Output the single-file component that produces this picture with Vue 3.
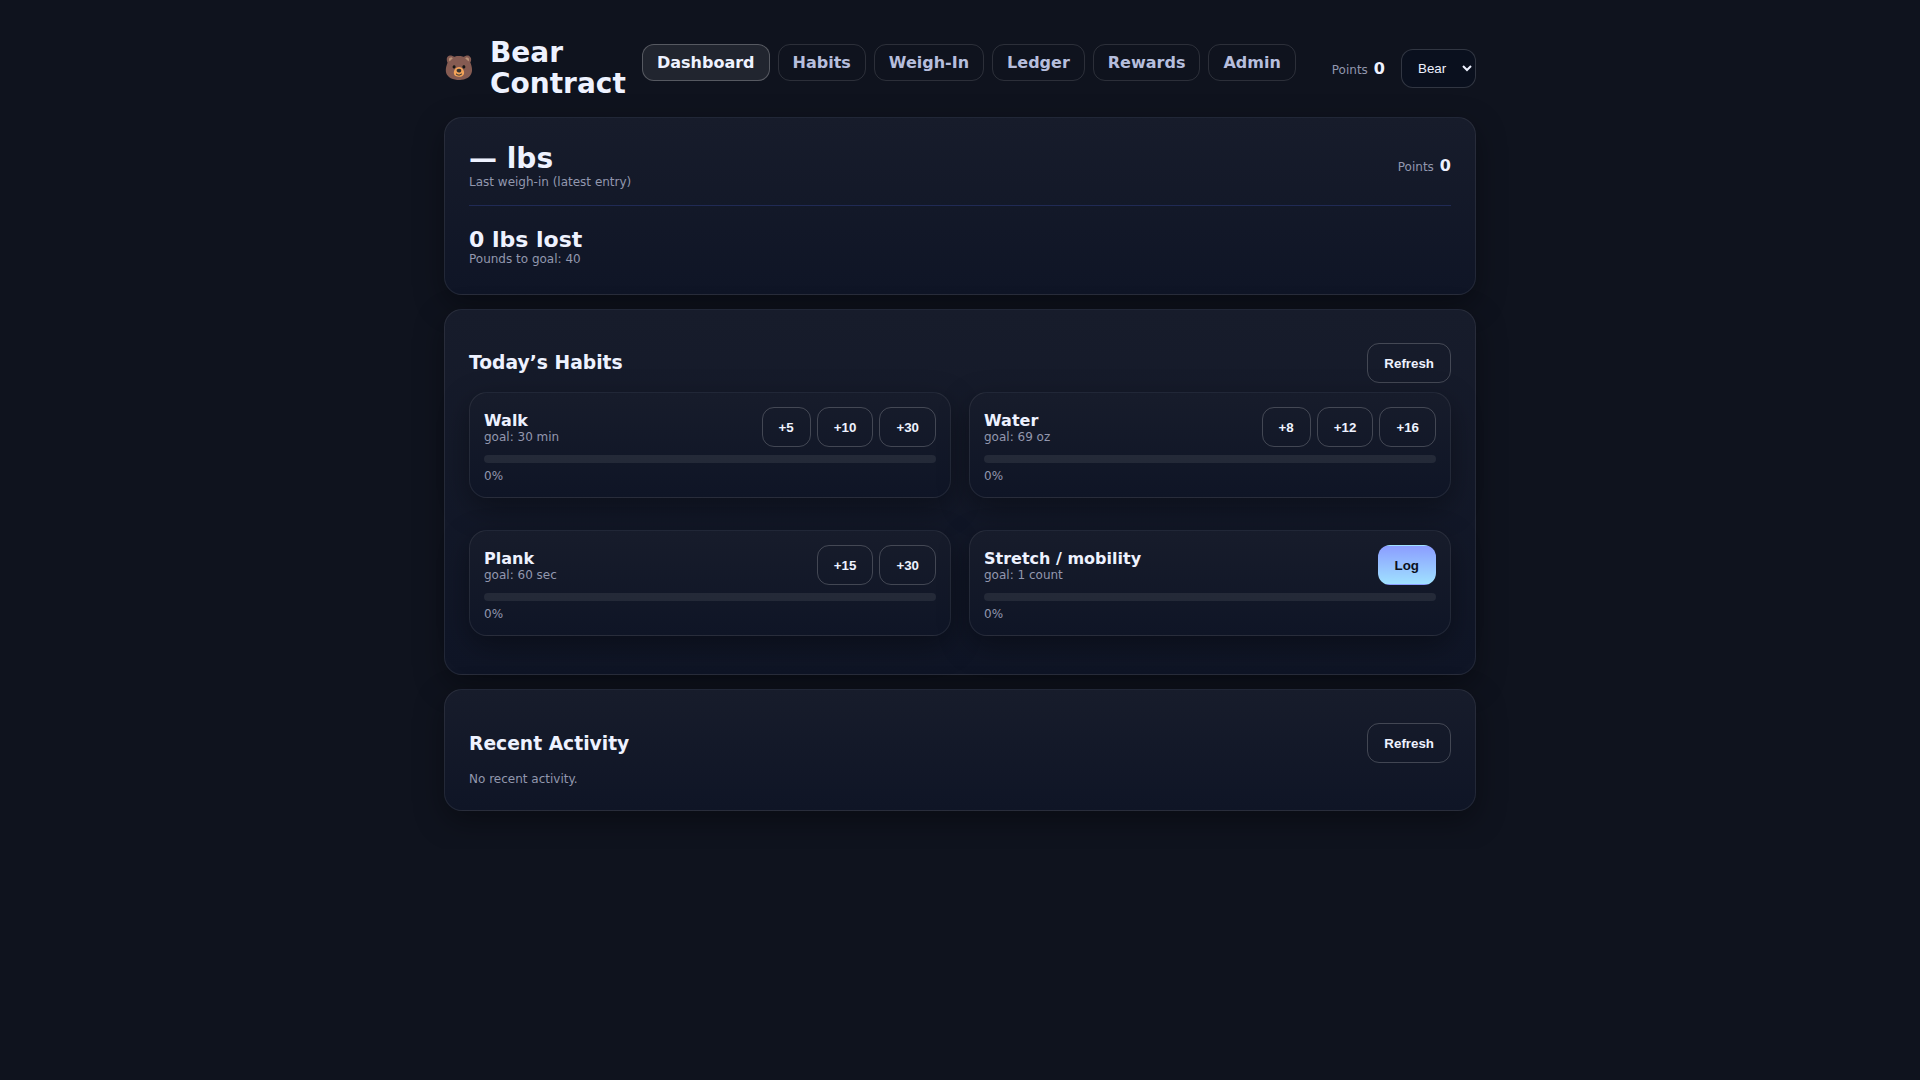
<script setup>
import { ref } from 'vue'

const tabs = ['Dashboard', 'Habits', 'Weigh-In', 'Ledger', 'Rewards', 'Admin']
const active = ref('Dashboard')
const user = ref('Bear')

const habits = [
  { name: 'Walk', goal: '30 min', progress: 0, steps: ['+5', '+10', '+30'] },
  { name: 'Water', goal: '69 oz', progress: 0, steps: ['+8', '+12', '+16'] },
  { name: 'Plank', goal: '60 sec', progress: 0, steps: ['+15', '+30'] },
  { name: 'Stretch / mobility', goal: '1 count', progress: 0, steps: [] },
]
</script>

<template>
  <div class="container">
    <header class="header">
      <div class="brand">
        <span class="logo" aria-hidden="true">🐻</span>
        <h1>Bear Contract</h1>
      </div>
      <nav class="tabs">
        <a
          v-for="tab in tabs"
          :key="tab"
          href="#"
          class="tab"
          :class="{ active: tab === active }"
          @click.prevent="active = tab"
        >{{ tab }}</a>
      </nav>
      <div class="account">
        <div class="points"><span class="muted">Points</span><strong>0</strong></div>
        <select v-model="user" aria-label="User">
          <option>Bear</option>
        </select>
      </div>
    </header>

    <main>
      <section class="card summary">
        <div class="row">
          <div>
            <div class="weight">— lbs</div>
            <div class="muted">Last weigh-in (latest entry)</div>
          </div>
          <div class="points"><span class="muted">Points</span><strong>0</strong></div>
        </div>
        <hr />
        <div class="lost">0 lbs lost</div>
        <div class="muted">Pounds to goal: 40</div>
      </section>

      <section class="card">
        <div class="row">
          <h3>Today’s Habits</h3>
          <button type="button">Refresh</button>
        </div>
        <div class="habits">
          <article v-for="habit in habits" :key="habit.name" class="card habit">
            <div class="row">
              <div>
                <div class="name">{{ habit.name }}</div>
                <div class="muted">goal: {{ habit.goal }}</div>
              </div>
              <div class="actions">
                <button v-for="step in habit.steps" :key="step" type="button">{{ step }}</button>
                <button v-if="!habit.steps.length" type="button" class="primary">Log</button>
              </div>
            </div>
            <div class="bar"><div class="fill" :style="{ width: habit.progress + '%' }"></div></div>
            <div class="muted">{{ habit.progress }}%</div>
          </article>
        </div>
      </section>

      <section class="card activity">
        <div class="row">
          <h3>Recent Activity</h3>
          <button type="button">Refresh</button>
        </div>
        <div class="muted">No recent activity.</div>
      </section>
    </main>
  </div>
</template>

<style>
body {
  margin: 0;
  background: #0f131e;
}
</style>

<style scoped>
.container {
  box-sizing: border-box;
  max-width: 1080px;
  margin: 0 auto;
  padding: 37px 24px 24px;
  color: #eef2ff;
  font-family: "DejaVu Sans", sans-serif;
  font-size: 16px;
}

.header {
  display: flex;
  align-items: center;
  gap: 16px;
  margin-bottom: 18px;
}

.brand {
  display: flex;
  align-items: center;
  gap: 16px;
  flex: 1;
}

.logo {
  font-size: 24px;
  line-height: 28px;
}

h1 {
  margin: 0;
  font-size: 28px;
  line-height: 31px;
}

.tabs {
  display: flex;
  gap: 8px;
  margin-bottom: 12px;
}

.tab {
  padding: 8px 14px;
  border: 1px solid rgba(255, 255, 255, 0.12);
  border-radius: 12px;
  color: #b6bedd;
  font-weight: 700;
  text-decoration: none;
  white-space: nowrap;
}

.tab.active {
  background: rgba(255, 255, 255, 0.08);
  border-color: rgba(255, 255, 255, 0.24);
  color: #eef2ff;
}

.account {
  display: flex;
  align-items: center;
  gap: 16px;
  margin-left: 20px;
}

.points {
  display: flex;
  align-items: baseline;
  gap: 6px;
}

.muted {
  color: #9297ae;
  font-size: 12px;
}

select {
  padding: 10px 12px;
  border: 1px solid rgba(255, 255, 255, 0.16);
  border-radius: 12px;
  background: #0a101e;
  color: #eef2ff;
  font-family: "Liberation Sans", sans-serif;
}

.card {
  margin-bottom: 14px;
  padding: 24px;
  border: 1px solid rgba(255, 255, 255, 0.08);
  border-radius: 18px;
  background: linear-gradient(180deg, #171c2b, #0f1526);
  box-shadow: 0 10px 30px rgba(0, 0, 0, 0.35);
}

.summary {
  padding-bottom: 28px;
}

.row {
  display: flex;
  align-items: center;
  justify-content: space-between;
}

.weight {
  font-size: 28px;
  font-weight: 700;
}

.lost {
  font-size: 22px;
  font-weight: 700;
}

hr {
  margin: 16px 0 21px;
  border: 0;
  border-top: 1px solid #202a55;
}

h3 {
  line-height: 1.1;
}

.activity h3 {
  line-height: normal;
}

button {
  min-height: 40px;
  padding: 0 16px;
  border: 1px solid rgba(255, 255, 255, 0.2);
  border-radius: 12px;
  background: transparent;
  color: #eef2ff;
  font-family: "Liberation Sans", sans-serif;
  font-weight: 700;
  cursor: pointer;
}

.primary {
  border-color: transparent;
  background: linear-gradient(180deg, #8b9dff, #a0e1ff);
  color: #0b1020;
}

.habits {
  display: grid;
  grid-template-columns: repeat(2, 1fr);
  gap: 18px;
}

.habit {
  padding: 14px;
}

.name {
  font-weight: 700;
}

.actions {
  display: flex;
  gap: 6px;
}

.bar {
  height: 8px;
  margin: 8px 0 6px;
  overflow: hidden;
  border-radius: 4px;
  background: rgba(255, 255, 255, 0.08);
}

.fill {
  height: 100%;
  background: #8b9dff;
}
</style>
